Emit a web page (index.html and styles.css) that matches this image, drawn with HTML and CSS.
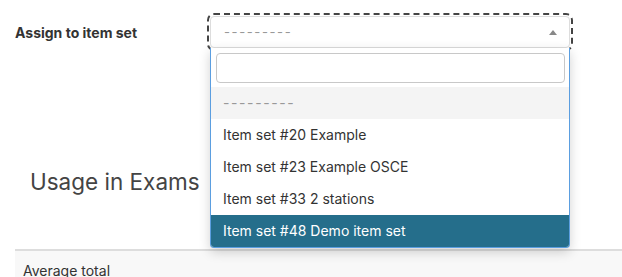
FILE: index.html
```html
<!DOCTYPE html>
<html lang="en">
<head>
    <meta charset="UTF-8">
    <title>Item</title>
    <link rel="stylesheet" href="styles.css">
</head>
<body>
    <div class="page">
        <div class="form-row">
            <label class="form-label">Assign to item set</label>
            <div class="select-wrap">
                <div class="select-box">
                    <span class="select-placeholder">---------</span>
                    <span class="select-arrow"></span>
                </div>
                <div class="dropdown">
                    <div class="dropdown-search">
                        <input class="search-input" type="text" autofocus>
                    </div>
                    <ul class="options">
                        <li class="option option-empty">---------</li>
                        <li class="option">Item set #20 Example</li>
                        <li class="option">Item set #23 Example OSCE</li>
                        <li class="option">Item set #33 2 stations</li>
                        <li class="option option-active">Item set #48 Demo item set</li>
                    </ul>
                </div>
            </div>
        </div>
        <h2 class="section-title">Usage in Exams</h2>
        <div class="stats">
            <div class="stats-row">Average total</div>
        </div>
    </div>
</body>
</html>
```
FILE: styles.css
```css
*{
    padding: 0;
    margin: 0;
    box-sizing: border-box;
}
body{
    font-family: Inter, "Noto Sans", sans-serif;
    color: #333;
    background: #fff;
    overflow: hidden;
}
li{
    list-style: none;
}
.page{
    padding-left: 15px;
}
.form-row{
    display: flex;
    align-items: center;
    padding-top: 16px;
}
.form-label{
    width: 195px;
    font-size: 14px;
    font-weight: 700;
    color: #333;
}
.select-wrap{
    position: relative;
    width: 360px;
}
.select-box{
    height: 32px;
    display: flex;
    align-items: center;
    justify-content: space-between;
    padding: 0 12px 0 13px;
    border: 1px solid #ddd;
    border-radius: 4px;
    background: #fff;
    outline: 2px dashed #444;
    outline-offset: 1px;
}
.select-placeholder{
    font-size: 13px;
    color: #999;
    letter-spacing: 1.6px;
}
.select-arrow{
    width: 0;
    height: 0;
    border-left: 4px solid transparent;
    border-right: 4px solid transparent;
    border-bottom: 5px solid #888;
}
/* opened select2-like dropdown, lies over the page */
.dropdown{
    position: absolute;
    top: 32px;
    left: 0;
    width: 360px;
    background: #fff;
    border: 1px solid #5b9ee0;
    border-top: none;
    border-radius: 0 0 4px 4px;
    box-shadow: 0 4px 12px rgba(0,0,0,0.18);
    overflow: hidden;
    z-index: 5;
}
.dropdown-search{
    padding: 5px 4px 4px 5px;
}
.search-input{
    display: block;
    width: 100%;
    height: 30px;
    border: 1px solid #c8c8c8;
    border-radius: 4px;
    padding: 0 4px;
    font-size: 14px;
    font-family: inherit;
    outline: none;
}
.option{
    height: 32px;
    line-height: 32px;
    padding-left: 12px;
    font-size: 14px;
    color: #333;
}
.option-empty{
    background: #f4f4f4;
    color: #999;
    letter-spacing: 1.6px;
}
.option-active{
    background: #256e8b;
    color: #fff;
}
.section-title{
    margin: 119px 0 0 15px;
    font-size: 22.5px;
    font-weight: 400;
    color: #444;
    line-height: 30px;
}
.stats{
    margin-top: 52px;
    border-top: 2px solid #ddd;
    background: #f8f8f8;
    height: 40px;
}
.stats-row{
    padding: 11px 0 0 8px;
    font-size: 14px;
    color: #333;
}
```
